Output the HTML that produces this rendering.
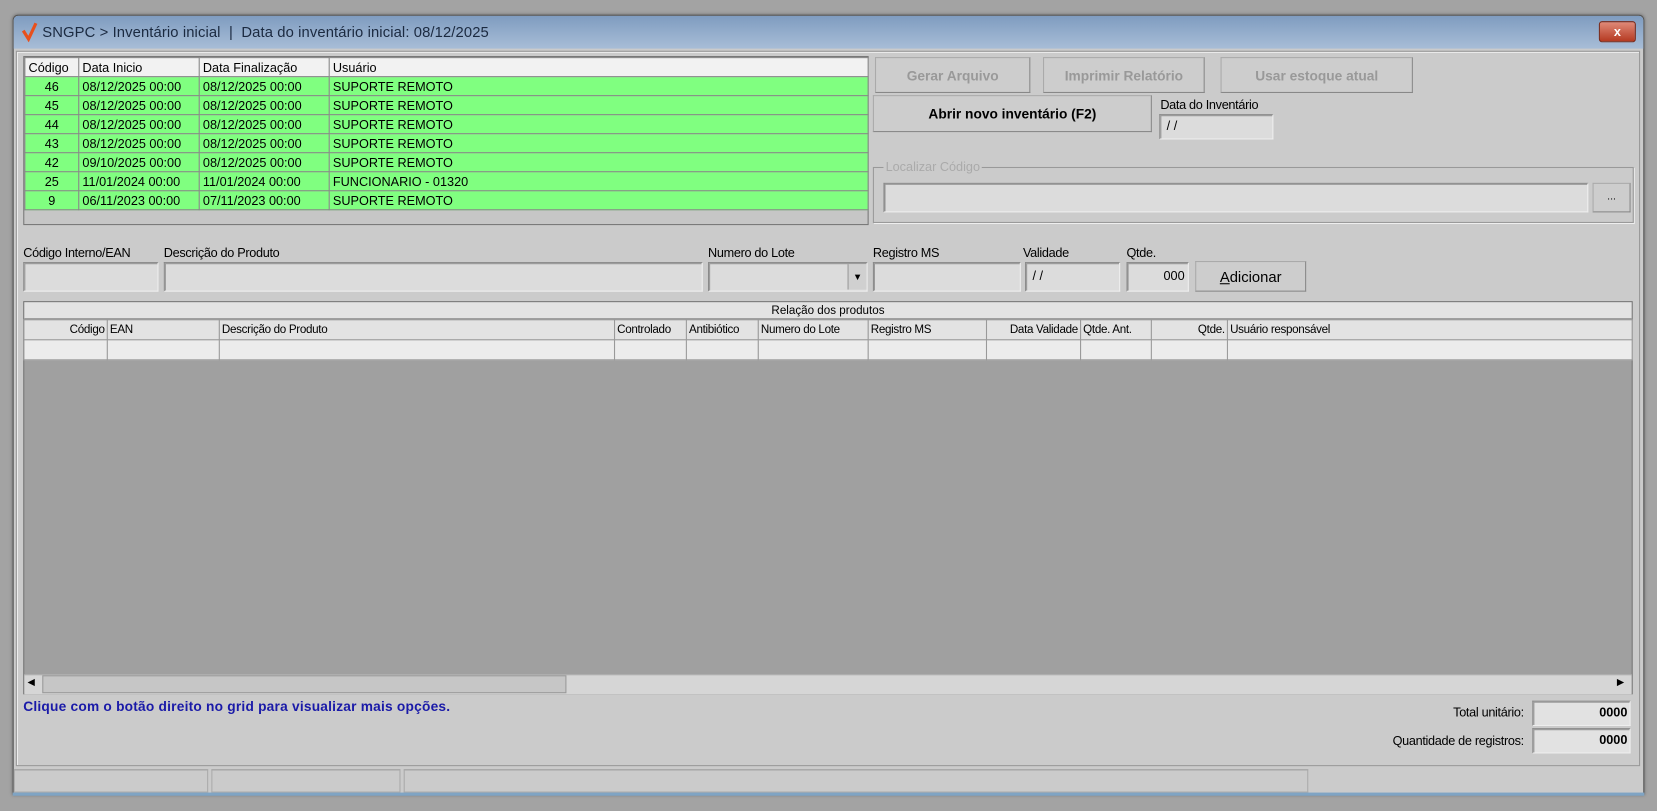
<!DOCTYPE html>
<html><head><meta charset="utf-8"><style>
*{box-sizing:border-box;margin:0;padding:0}
html,body{width:1657px;height:811px;overflow:hidden;background:#a3a3a3}
#s{position:absolute;left:0;top:0;width:1568px;height:767px;transform:scale(1.05676);transform-origin:0 0;font-family:"Liberation Sans",sans-serif;font-size:12px;color:#000}
.a{position:absolute}
.win{left:12px;top:14px;width:1544px;height:738px;background:#cbcbcb;border:1px solid #555;border-radius:5px 5px 0 0;box-shadow:0 0 3px #666}
.title{left:13px;top:15px;width:1542px;height:31px;background:linear-gradient(#7f9cc0,#a8bdd7);border-radius:4px 4px 0 0}
.inp{background:#dcdcdc;border:1px solid #888;border-right-color:#eee;border-bottom-color:#eee;box-shadow:inset 1px 1px 0 #999}
.btn{background:#cdcdcd;border:1px solid #aaa;border-right-color:#888;border-bottom-color:#888;text-align:center;font-size:13px}
.dis{color:#999;font-weight:bold}
.g1 td{height:18px;border:1px solid #888;background:#80ff80;padding:0 3px;font-size:12px;white-space:nowrap}
table{border-collapse:collapse;table-layout:fixed}
.lb{font-size:12px;letter-spacing:-0.3px}
.hd td{border:1px solid #999;background:#e3e3e3;font-size:11px;height:19px;padding:0 2px;letter-spacing:-0.3px;white-space:nowrap}
</style></head><body><div id="s">
<div class="a win"></div>
<div class="a title"></div>
<svg class="a" style="left:20px;top:20px" width="16" height="20"><path d="M2 9 L7 17 L14 2" stroke="#e8501c" stroke-width="3" fill="none"/></svg>
<div class="a" style="left:40px;top:22px;font-size:14px;color:#1b2a40;letter-spacing:0.1px">SNGPC &gt; Inventário inicial &nbsp;| &nbsp;Data do inventário inicial: 08/12/2025</div>
<div class="a" style="left:1513px;top:20px;width:35px;height:20px;background:linear-gradient(#e08a78,#b53a22);border:1px solid #7a2a1a;border-radius:3px;color:#fff;font-weight:bold;text-align:center;line-height:18px;font-size:12px">x</div>
<div class="a" style="left:15px;top:48px;width:1537px;height:677px;border:1px solid #999;box-shadow:inset 1px 1px 0 #eee"></div>

<div class="a" style="left:22px;top:53px;width:800px;height:160px;background:#c6c6c6;border:1px solid #777">
<table class="g1" style="width:799px">
<col style="width:51px"><col style="width:114px"><col style="width:123px"><col>
<tr><td style="background:#f2f2f2">Código</td><td style="background:#f2f2f2">Data Inicio</td><td style="background:#f2f2f2">Data Finalização</td><td style="background:#f2f2f2">Usuário</td></tr>
<tr><td style="text-align:center">46</td><td>08/12/2025 00:00</td><td>08/12/2025 00:00</td><td>SUPORTE REMOTO</td></tr>
<tr><td style="text-align:center">45</td><td>08/12/2025 00:00</td><td>08/12/2025 00:00</td><td>SUPORTE REMOTO</td></tr>
<tr><td style="text-align:center">44</td><td>08/12/2025 00:00</td><td>08/12/2025 00:00</td><td>SUPORTE REMOTO</td></tr>
<tr><td style="text-align:center">43</td><td>08/12/2025 00:00</td><td>08/12/2025 00:00</td><td>SUPORTE REMOTO</td></tr>
<tr><td style="text-align:center">42</td><td>09/10/2025 00:00</td><td>08/12/2025 00:00</td><td>SUPORTE REMOTO</td></tr>
<tr><td style="text-align:center">25</td><td>11/01/2024 00:00</td><td>11/01/2024 00:00</td><td>FUNCIONARIO - 01320</td></tr>
<tr><td style="text-align:center">9</td><td>06/11/2023 00:00</td><td>07/11/2023 00:00</td><td>SUPORTE REMOTO</td></tr>
</table></div>

<div class="a btn dis" style="left:828px;top:54px;width:147px;height:34px;line-height:33px">Gerar Arquivo</div>
<div class="a btn dis" style="left:987px;top:54px;width:153px;height:34px;line-height:33px">Imprimir Relatório</div>
<div class="a btn dis" style="left:1155px;top:54px;width:182px;height:34px;line-height:33px">Usar estoque atual</div>
<div class="a btn" style="left:826px;top:90px;width:264px;height:35px;line-height:34px;font-weight:bold">Abrir novo inventário (F2)</div>
<div class="a lb" style="left:1098px;top:92px">Data do Inventário</div>
<div class="a inp" style="left:1097px;top:108px;width:108px;height:24px;padding:3px 6px">/ /</div>

<div class="a" style="left:826px;top:158px;width:720px;height:53px;border:1px solid #999;box-shadow:1px 1px 0 #eee"></div>
<div class="a" style="left:836px;top:151px;background:#cbcbcb;color:#aaa;padding:0 2px">Localizar Código</div>
<div class="a inp" style="left:836px;top:173px;width:667px;height:28px"></div>
<div class="a btn" style="left:1507px;top:173px;width:36px;height:28px;line-height:26px;font-size:10px">...</div>

<div class="a lb" style="left:22px;top:232px">Código Interno/EAN</div>
<div class="a lb" style="left:155px;top:232px">Descrição do Produto</div>
<div class="a lb" style="left:670px;top:232px">Numero do Lote</div>
<div class="a lb" style="left:826px;top:232px">Registro MS</div>
<div class="a lb" style="left:968px;top:232px">Validade</div>
<div class="a lb" style="left:1066px;top:232px">Qtde.</div>
<div class="a inp" style="left:22px;top:248px;width:128px;height:28px"></div>
<div class="a inp" style="left:155px;top:248px;width:510px;height:28px"></div>
<div class="a inp" style="left:670px;top:248px;width:151px;height:28px"></div>
<div class="a" style="left:802px;top:250px;width:18px;height:24px;background:#d0d0d0;border-left:1px solid #999;font-size:9px;text-align:center;line-height:24px">▼</div>
<div class="a inp" style="left:826px;top:248px;width:140px;height:28px"></div>
<div class="a inp" style="left:970px;top:248px;width:90px;height:28px;padding:5px 6px">/ /</div>
<div class="a inp" style="left:1066px;top:248px;width:59px;height:28px;padding:5px 3px;text-align:right">000</div>
<div class="a btn" style="left:1131px;top:247px;width:105px;height:29px;line-height:28px;font-size:14px"><u>A</u>dicionar</div>

<div class="a" style="left:22px;top:285px;width:1523px;height:372px;background:#a0a0a0;border:1px solid #777"></div>
<div class="a" style="left:23px;top:286px;width:1521px;height:16px;background:#e3e3e3;border-bottom:1px solid #999;text-align:center;font-size:11px;line-height:16px">Relação dos produtos</div>
<table class="a hd" style="left:22px;top:302px;width:1523px">
<col style="width:79px"><col style="width:106px"><col style="width:374px"><col style="width:68px"><col style="width:68px"><col style="width:104px"><col style="width:112px"><col style="width:89px"><col style="width:67px"><col style="width:72px"><col>
<tr><td style="text-align:right">Código</td><td>EAN</td><td>Descrição do Produto</td><td>Controlado</td><td>Antibiótico</td><td>Numero do Lote</td><td>Registro MS</td><td style="text-align:right">Data Validade</td><td>Qtde. Ant.</td><td style="text-align:right">Qtde.</td><td>Usuário responsável</td></tr>
<tr><td style="background:#ececec"></td><td style="background:#ececec"></td><td style="background:#ececec"></td><td style="background:#ececec"></td><td style="background:#ececec"></td><td style="background:#ececec"></td><td style="background:#ececec"></td><td style="background:#ececec"></td><td style="background:#ececec"></td><td style="background:#ececec"></td><td style="background:#ececec"></td></tr>
</table>
<div class="a" style="left:23px;top:638px;width:1521px;height:19px;background:#d6d6d6;border-top:1px solid #aaa"></div>
<div class="a" style="left:40px;top:639px;width:496px;height:17px;background:#c6c6c6;border:1px solid #999"></div>
<div class="a" style="left:26px;top:640px;font-size:9px">◀</div>
<div class="a" style="left:1530px;top:640px;font-size:9px">▶</div>

<div class="a" style="left:22px;top:661px;color:#1a1aa8;font-weight:bold;font-size:13px;letter-spacing:0.2px">Clique com o botão direito no grid para visualizar mais opções.</div>
<div class="a lb" style="left:1300px;top:667px;width:142px;text-align:right">Total unitário:</div>
<div class="a inp" style="left:1450px;top:663px;width:93px;height:24px;text-align:right;font-weight:bold;padding:3px 2px;background:#e2e2e2">0000</div>
<div class="a lb" style="left:1280px;top:694px;width:162px;text-align:right">Quantidade de registros:</div>
<div class="a inp" style="left:1450px;top:689px;width:93px;height:24px;text-align:right;font-weight:bold;padding:3px 2px;background:#e2e2e2">0000</div>

<div class="a" style="left:13px;top:728px;width:184px;height:22px;border:1px solid #aaa;border-top-color:#999"></div>
<div class="a" style="left:200px;top:728px;width:179px;height:22px;border:1px solid #aaa;border-top-color:#999"></div>
<div class="a" style="left:382px;top:728px;width:856px;height:22px;border:1px solid #aaa;border-top-color:#999"></div>
<div class="a" style="left:12px;top:750px;width:1544px;height:3px;background:#7fa4c4"></div>
</div></body></html>
